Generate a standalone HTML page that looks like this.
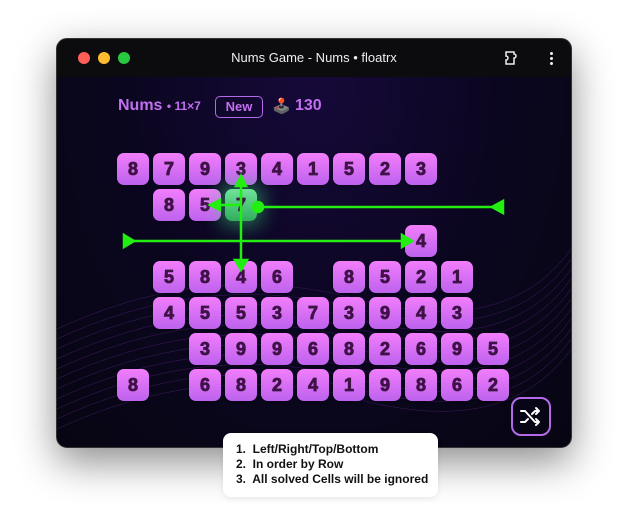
<!DOCTYPE html>
<html><head><style>
body{margin:0;width:626px;height:521px;background:#fff;position:relative;overflow:hidden;font-family:"Liberation Sans",sans-serif}
.win{position:absolute;left:56px;top:38px;width:514px;height:408px;border-radius:11px;background:radial-gradient(ellipse at 50% 10%,#16093a 0%,#0b0620 50%,#070512 100%);box-shadow:0 14px 40px rgba(0,0,0,.45);overflow:hidden;border:1px solid #333}
.tb{position:absolute;left:0;top:0;right:0;height:38px;background:#0c0b0e;color:#eee;font-size:13px;text-align:center;line-height:38px}
.dot{position:absolute;top:13px;width:12px;height:12px;border-radius:50%}
.c{position:absolute;width:32px;height:32px;border-radius:7px;background:linear-gradient(#f27efb,#bd62ee);color:#3e1246;font-weight:bold;font-size:18px;text-align:center;line-height:33px;box-shadow:0 1px 2px rgba(0,0,0,.4);-webkit-text-stroke:0.8px #3e1246}
.g{background:linear-gradient(#6fe39a,#2fae5d);box-shadow:0 0 18px 6px rgba(60,220,120,.45)}
.tip{position:absolute;left:223px;top:433px;width:215px;height:64px;background:#fff;border-radius:8px;font-size:12px;font-weight:bold;color:#111;padding:9px 0 0 13px;box-sizing:border-box;line-height:15px;box-shadow:0 2px 6px rgba(0,0,0,.08)}
</style></head><body>
<div class="win">
<svg style="position:absolute;left:0;top:200px" width="514" height="208"><g stroke="#6a2f90" stroke-width="0.6" fill="none" opacity=".45">
<path d="M0 90 Q150 20 300 60 T514 10"/><path d="M0 100 Q150 30 300 70 T514 20"/><path d="M0 110 Q150 40 300 80 T514 30"/><path d="M0 120 Q150 50 300 90 T514 40"/><path d="M0 130 Q150 60 300 100 T514 50"/><path d="M0 140 Q150 70 300 110 T514 60"/><path d="M0 150 Q150 80 300 120 T514 70"/><path d="M0 160 Q150 90 300 130 T514 80"/><path d="M0 170 Q150 100 300 140 T514 90"/><path d="M0 180 Q150 110 300 150 T514 100"/><path d="M0 190 Q150 120 300 160 T514 110"/>
</g></svg>
<div class="tb">Nums Game - Nums • floatrx</div>
<div class="dot" style="left:21px;background:#fe5f57"></div>
<div class="dot" style="left:41px;background:#febc2e"></div>
<div class="dot" style="left:61px;background:#28c840"></div>
<svg style="position:absolute;left:447px;top:11px" width="16" height="16"><path d="M2 2h8v2a2 2 0 0 1 0 4v6H2V10a2 2 0 0 0 0-4z" fill="none" stroke="#eee" stroke-width="1.5"/></svg>
<div style="position:absolute;left:493px;top:13px;width:3px;height:3px;background:#eee;border-radius:50%;box-shadow:0 5px #eee,0 10px #eee"></div>
<div style="position:absolute;left:61px;top:58px;color:#c36ff0;font-weight:bold;font-size:16px">Nums <span style="font-size:12px">• 11×7</span></div>
<div style="position:absolute;left:158px;top:57px;width:46px;height:20px;border:1.5px solid #b46ae8;border-radius:5px;color:#c36ff0;font-weight:bold;font-size:13px;text-align:center;line-height:20px">New</div>
<div style="position:absolute;left:215px;top:58px;font-size:15px">🕹️</div>
<div style="position:absolute;left:238px;top:58px;color:#c36ff0;font-weight:bold;font-size:16px">130</div>
<div style="position:absolute;left:454px;top:358px;width:40px;height:39px;border:2px solid #b46ae8;border-radius:10px;box-sizing:border-box"><svg width="36" height="35" viewBox="0 0 36 35"><g stroke="#fff" stroke-width="2" fill="none" stroke-linecap="round" stroke-linejoin="round"><path d="M8 12h4l10 11h4M8 23h4l3-3M19 15l3-3h4M23 9l3 3-3 3M23 20l3 3-3 3"/></g></svg></div>
</div>
<div id="grid"></div>
<svg style="position:absolute;left:0;top:0" width="626" height="521"><g stroke="#22ee11" stroke-width="2.5" fill="#22ee11">
<line x1="258" y1="207" x2="498" y2="207"/><polygon points="492,207 503,201 503,213"/><circle cx="258" cy="207" r="5"/>
<line x1="128" y1="241" x2="405" y2="241"/><polygon points="124,235 134,241 124,247"/><polygon points="402,235 412,241 402,247"/>
<line x1="241" y1="178" x2="241" y2="264"/><polygon points="236,186 241,176 246,186"/><polygon points="235,260 247,260 241,270"/>
<line x1="241" y1="205" x2="216" y2="205"/><polygon points="220,200 210,205 220,210"/></g></svg>
<div class="tip">1.&nbsp; Left/Right/Top/Bottom<br>2.&nbsp; In order by Row<br>3.&nbsp; All solved Cells will be ignored</div>
<script>
var rows=[[0,"879341523"],[1,"857"],[8,"4"],[1,"5846 8521"],[1,"455373943"],[2,"399682695"],[0,"8 682419862"]];
var h="";rows.forEach(function(r,i){var s=r[1];for(var j=0;j<s.length;j++){if(s[j]==" ")continue;var x=117+(r[0]+j)*36,y=153+i*36;var g=(i==1&&j==2)?" g":"";h+='<div class="c'+g+'" style="left:'+x+'px;top:'+y+'px">'+s[j]+'</div>';}});
document.getElementById("grid").innerHTML=h;
</script>
</body></html>
